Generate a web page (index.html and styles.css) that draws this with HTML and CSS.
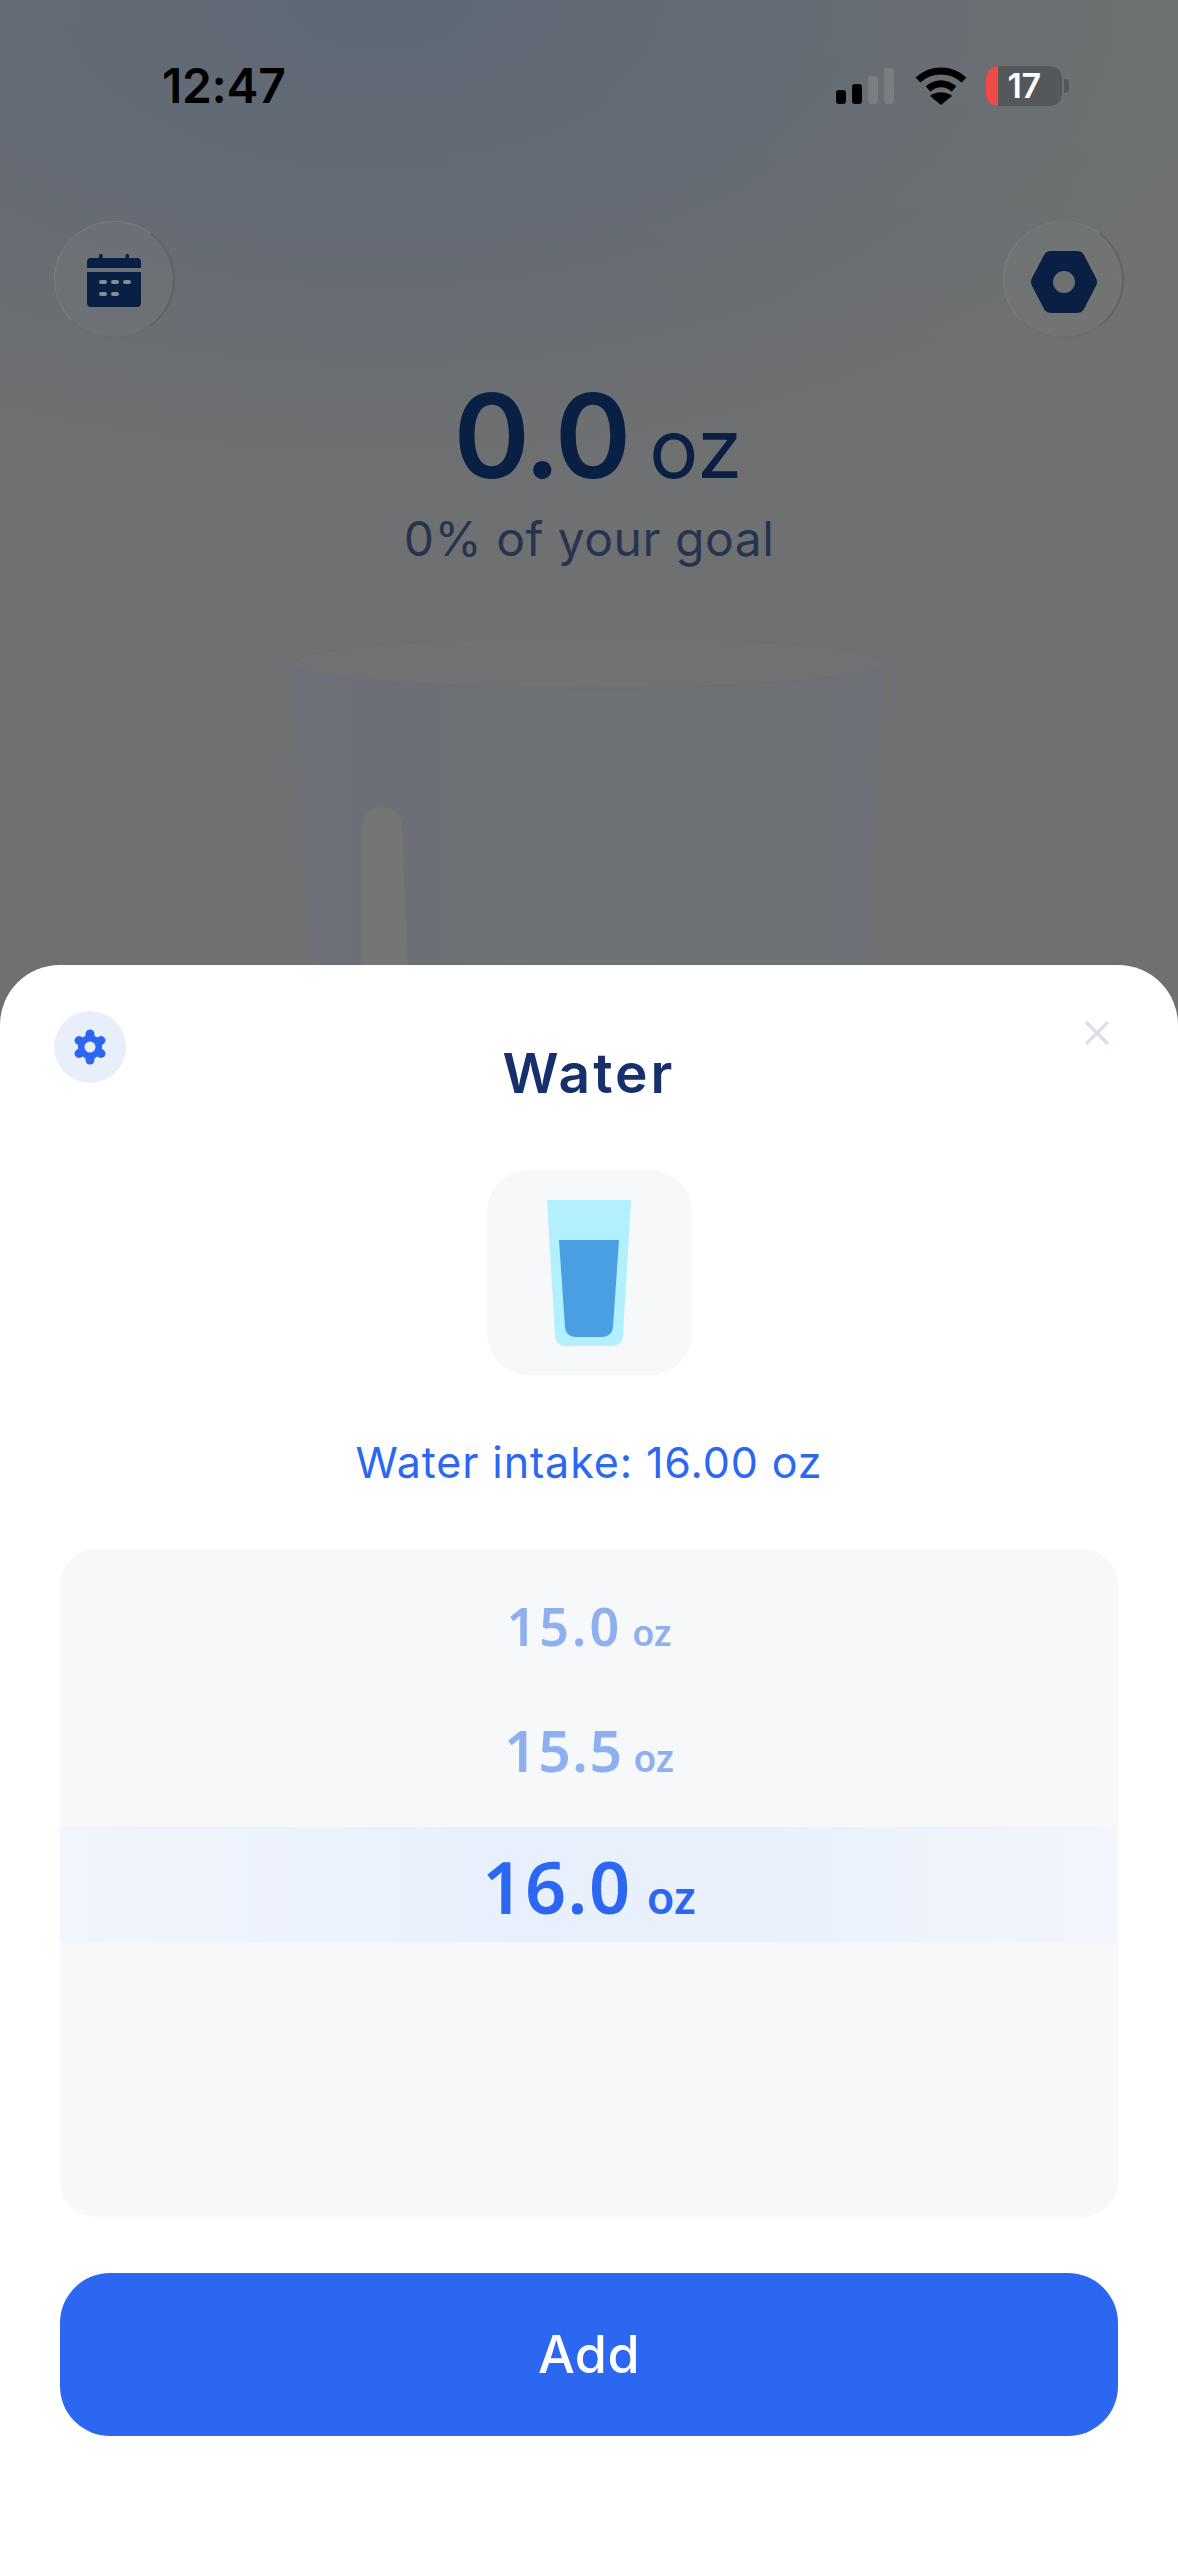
FILE: index.html
```html
<!DOCTYPE html>
<html lang="en">
<head>
<meta charset="utf-8">
<title>Water</title>
<link rel="stylesheet" href="styles.css">
</head>
<body>
<div class="app">
  <section class="screen">
    <div class="status">
      <span class="time">12:47</span>
      <div class="status-icons">
        <svg class="signal" width="58" height="36" viewBox="0 0 58 36">
          <rect class="on" x="0" y="22" width="10" height="14" rx="3"/>
          <rect class="on" x="16" y="16" width="10" height="20" rx="3"/>
          <rect class="off" x="32" y="8" width="10" height="28" rx="3"/>
          <rect class="off" x="48" y="0" width="10" height="36" rx="3"/>
        </svg>
        <svg class="wifi" width="52" height="38" viewBox="0 0 52 38">
          <path d="M3 13 C16 1 36 1 49 13" />
          <path d="M13 22 C21 15 31 15 39 22" />
          <path class="wifi-tip" d="M26 38 L15 29 C21 24 31 24 37 29 Z" />
        </svg>
        <div class="battery"><span class="battery-level"></span><span class="battery-num">17</span></div>
        <span class="battery-nub"></span>
      </div>
    </div>
    <nav class="nav">
      <button class="round" type="button" aria-label="Calendar">
        <svg width="54" height="54" viewBox="0 0 54 54">
          <path class="navy" d="M4 5 H12 V2.5 A1.8 1.8 0 0 1 15.6 2.5 V5 H38.4 V2.5 A1.8 1.8 0 0 1 42 2.5 V5 H50 A4 4 0 0 1 54 9 V15 H0 V9 A4 4 0 0 1 4 5 Z"/>
          <path class="navy" d="M0 19 H54 V50 A4 4 0 0 1 50 54 H4 A4 4 0 0 1 0 50 Z"/>
          <rect class="dot" x="12" y="27" width="8" height="4" rx="2"/>
          <rect class="dot" x="24" y="27" width="8" height="4" rx="2"/>
          <rect class="dot" x="36" y="27" width="8" height="4" rx="2"/>
          <rect class="dot" x="12" y="39" width="8" height="4" rx="2"/>
          <rect class="dot" x="24" y="39" width="8" height="4" rx="2"/>
        </svg>
      </button>
      <button class="round" type="button" aria-label="Settings">
        <svg class="nut" width="68" height="64" viewBox="0 0 68 64">
          <path class="navy hex" d="M21 9 H47 L59 32 L47 55 H21 L9 32 Z"/>
          <circle class="hole" cx="34" cy="32" r="11"/>
        </svg>
      </button>
    </nav>
    <div class="total"><span class="total-num">0.0</span><span class="total-unit">oz</span></div>
    <p class="goal">0% of your goal</p>
    <svg class="big-glass" width="592" height="330" viewBox="0 0 592 330">
      <defs>
        <linearGradient id="glassFill" x1="0" x2="1" y1="0" y2="0">
          <stop offset="0" stop-color="#6c7079"/>
          <stop offset="0.2" stop-color="#6c6f76"/>
          <stop offset="0.5" stop-color="#6f7274"/>
          <stop offset="0.85" stop-color="#6e7175"/>
          <stop offset="1" stop-color="#6d7078"/>
        </linearGradient>
      </defs>
      <path fill="url(#glassFill)" d="M0 27 C120 62 472 62 592 27 L572 330 L20 330 Z"/>
      <ellipse class="glass-rim" cx="296" cy="26" rx="294" ry="25"/>
      <path class="glass-shine" d="M68 190 A20 20 0 0 1 109 190 L115 330 L68 330 Z"/>
    </svg>
  </section>

  <section class="sheet">
    <header class="sheet-head">
      <button class="gear-btn" type="button" aria-label="Preferences">
        <svg width="36" height="36" viewBox="0 0 36 36">
          <g class="gear-lobes">
            <line x1="18" y1="18" x2="18" y2="5"/>
            <line x1="18" y1="18" x2="18" y2="31"/>
            <line x1="18" y1="18" x2="29" y2="11.5"/>
            <line x1="18" y1="18" x2="7" y2="24.5"/>
            <line x1="18" y1="18" x2="29" y2="24.5"/>
            <line x1="18" y1="18" x2="7" y2="11.5"/>
          </g>
          <circle class="gear-body" cx="18" cy="18" r="12"/>
          <circle class="gear-hole" cx="18" cy="18" r="5.5"/>
        </svg>
      </button>
      <h1 class="title">Water</h1>
      <button class="close" type="button" aria-label="Close">
        <svg width="26" height="26" viewBox="0 0 26 26">
          <path d="M2 2 L24 24 M24 2 L2 24"/>
        </svg>
      </button>
    </header>

    <div class="drink">
      <svg width="84" height="146" viewBox="0 0 84 146">
        <path class="glass-outer" d="M0 0 H84 L76 136 A10 10 0 0 1 66 146 H18 A10 10 0 0 1 8 136 Z"/>
        <path class="glass-water" d="M12 40 H72 L66 127 A10 10 0 0 1 56 137 H28 A10 10 0 0 1 18 127 Z"/>
      </svg>
    </div>

    <p class="intake">Water intake: 16.00 oz</p>

    <div class="picker">
      <div class="row row-a"><span class="num">15.0</span><span class="unit">oz</span></div>
      <div class="row row-b"><span class="num">15.5</span><span class="unit">oz</span></div>
      <div class="row row-sel"><span class="num">16.0</span><span class="unit">oz</span></div>
    </div>

    <button class="add" type="button">Add</button>
  </section>
</div>
</body>
</html>
```
FILE: styles.css
```css
* { box-sizing: border-box; }
html, body { margin: 0; padding: 0; background: #fff; }
body { font-family: "Inter", "Noto Sans", sans-serif; }
button { border: 0; padding: 0; background: none; font: inherit; }
p, h1 { margin: 0; }

.app { width: 1178px; height: 2560px; display: flex; flex-direction: column; overflow: hidden; background: #6f7071; }

.screen {
  height: 965px; flex: none; overflow: hidden;
  display: flex; flex-direction: column;
  background:
    radial-gradient(900px 480px at 380px 0px, #5e6876 0%, rgba(98,106,118,.8) 45%, rgba(110,112,114,0) 100%),
    linear-gradient(200deg, #6f7470 0%, #6f7071 35%);
}

.status { height: 40px; margin-top: 66px; padding: 0 109px 0 162px; display: flex; justify-content: space-between; align-items: center; flex: none; }
.time { font-family: "Inter", sans-serif; font-weight: 600; font-size: 48px; line-height: 40px; color: #000; letter-spacing: -.3px; }
.status-icons { display: flex; align-items: center; }
.signal .on { fill: #000; }
.signal .off { fill: #7b7e80; }
.wifi { margin-left: 21px; }
.wifi path { fill: none; stroke: #000; stroke-width: 7; }
.wifi .wifi-tip { fill: #000; stroke: none; }
.battery { position: relative; margin-left: 19px; width: 76px; height: 40px; border-radius: 12px; background: #55585a; display: flex; align-items: center; justify-content: center; }
.battery-level { position: absolute; left: 0; top: 0; bottom: 0; width: 12px; border-radius: 12px 0 0 12px; background: #ee4b46; }
.battery-num { position: relative; color: #fff; font-weight: 600; font-size: 34px; line-height: 38px; letter-spacing: -.5px; }
.battery-nub { width: 5px; height: 14px; margin-left: 2px; border-radius: 0 4px 4px 0; background: #55585a; }

.nav { margin-top: 115px; padding: 0 54px; display: flex; justify-content: space-between; flex: none; }
.round {
  width: 121px; height: 117px; border-radius: 50%;
  display: flex; align-items: center; justify-content: center;
  background: rgba(125,128,132,.2);
  border-right: 2px solid #5f6163;
  border-bottom: 1px solid #6a6c6e;
  border-left: 1px solid #7c7e80;
  border-top: 1px solid #787a7c;
}
.nut { margin: 5px 0 0 2px; }
.navy { fill: #0a1f44; }
.hex { stroke: #0a1f44; stroke-width: 16; stroke-linejoin: round; }
.hole { fill: #6e7172; }
.dot { fill: #8a8d92; }

.total { margin-top: 38px; display: flex; justify-content: center; align-items: baseline; gap: 21px; color: #0a1f44; line-height: 120px; flex: none; padding-left: 18px; }
.total-num { font-weight: 600; font-size: 116px; letter-spacing: -3px; }
.total-unit { font-weight: 400; font-size: 82px; }
.goal { text-align: center; color: #27344f; font-size: 48px; line-height: 60px; letter-spacing: .5px; flex: none; }

.big-glass { flex: none; margin: 68px 0 0 293px; }
.glass-rim { fill: #707274; stroke: #6d6f72; stroke-width: 1; }
.glass-shine { fill: #757573; }

.sheet { flex: 1; background: #fff; border-radius: 60px 60px 0 0; padding: 46px 60px 0; display: flex; flex-direction: column; }

.sheet-head { height: 91px; margin: 0 -6px; display: grid; grid-template-columns: 72px 1fr 72px; flex: none; }
.gear-btn { width: 72px; height: 72px; border-radius: 50%; background: #e8effb; display: flex; align-items: center; justify-content: center; }
.gear-lobes line { stroke: #2c67f2; stroke-width: 9; stroke-linecap: round; }
.gear-body { fill: #2c67f2; }
.gear-hole { fill: #e8effb; }
.title { margin-top: 32px; text-align: center; font-weight: 600; font-size: 55px; line-height: 60px; letter-spacing: 3px; color: #17306b; }
.close { width: 26px; height: 26px; margin: 9px 0 0 32px; }
.close svg { display: block; }
.close path { stroke: #dcdfe9; stroke-width: 3.5; fill: none; }

.drink { margin: 68px auto 0; width: 205px; height: 205px; border-radius: 42px; background: #f6f8fa; display: flex; align-items: center; justify-content: center; flex: none; }
.glass-outer { fill: #b2f0fd; }
.glass-water { fill: #4a9fe3; }

.intake { margin-top: 62px; text-align: center; color: #2c67f2; font-size: 43px; line-height: 50px; letter-spacing: .9px; flex: none; }

.picker { margin-top: 62px; height: 668px; border-radius: 36px; background: #f6f8fa; padding-top: 15px; flex: none; font-family: "Noto Sans", sans-serif; }
.row { display: flex; justify-content: center; align-items: baseline; font-weight: 600; }
.row-a, .row-b { color: #8fb0ef; }
.row-a { height: 124px; line-height: 124px; gap: 10px; }
.row-b { height: 124px; line-height: 124px; gap: 10px; }
.row-a .num { font-size: 52px; letter-spacing: 3px; }
.row-a .unit { font-size: 36px; }
.row-b .num { font-size: 57px; letter-spacing: 1.5px; }
.row-b .unit { font-size: 37px; }
.row-sel {
  margin-top: 15px; height: 115px; line-height: 119px; gap: 15px; color: #2c67f2;
  background: linear-gradient(90deg, #f1f5fc 0%, #e8f0fd 45%, #eaf1fc 70%, #f3f6fb 100%);
}
.row-sel .num { font-size: 72px; letter-spacing: 1.5px; }
.row-sel .unit { font-size: 45px; }

.add { margin-top: 56px; height: 163px; flex: none; border-radius: 50px; background: #2c67f2; color: #fff; font-family: "Inter", sans-serif; font-weight: 500; font-size: 52px; letter-spacing: .5px; }
```
